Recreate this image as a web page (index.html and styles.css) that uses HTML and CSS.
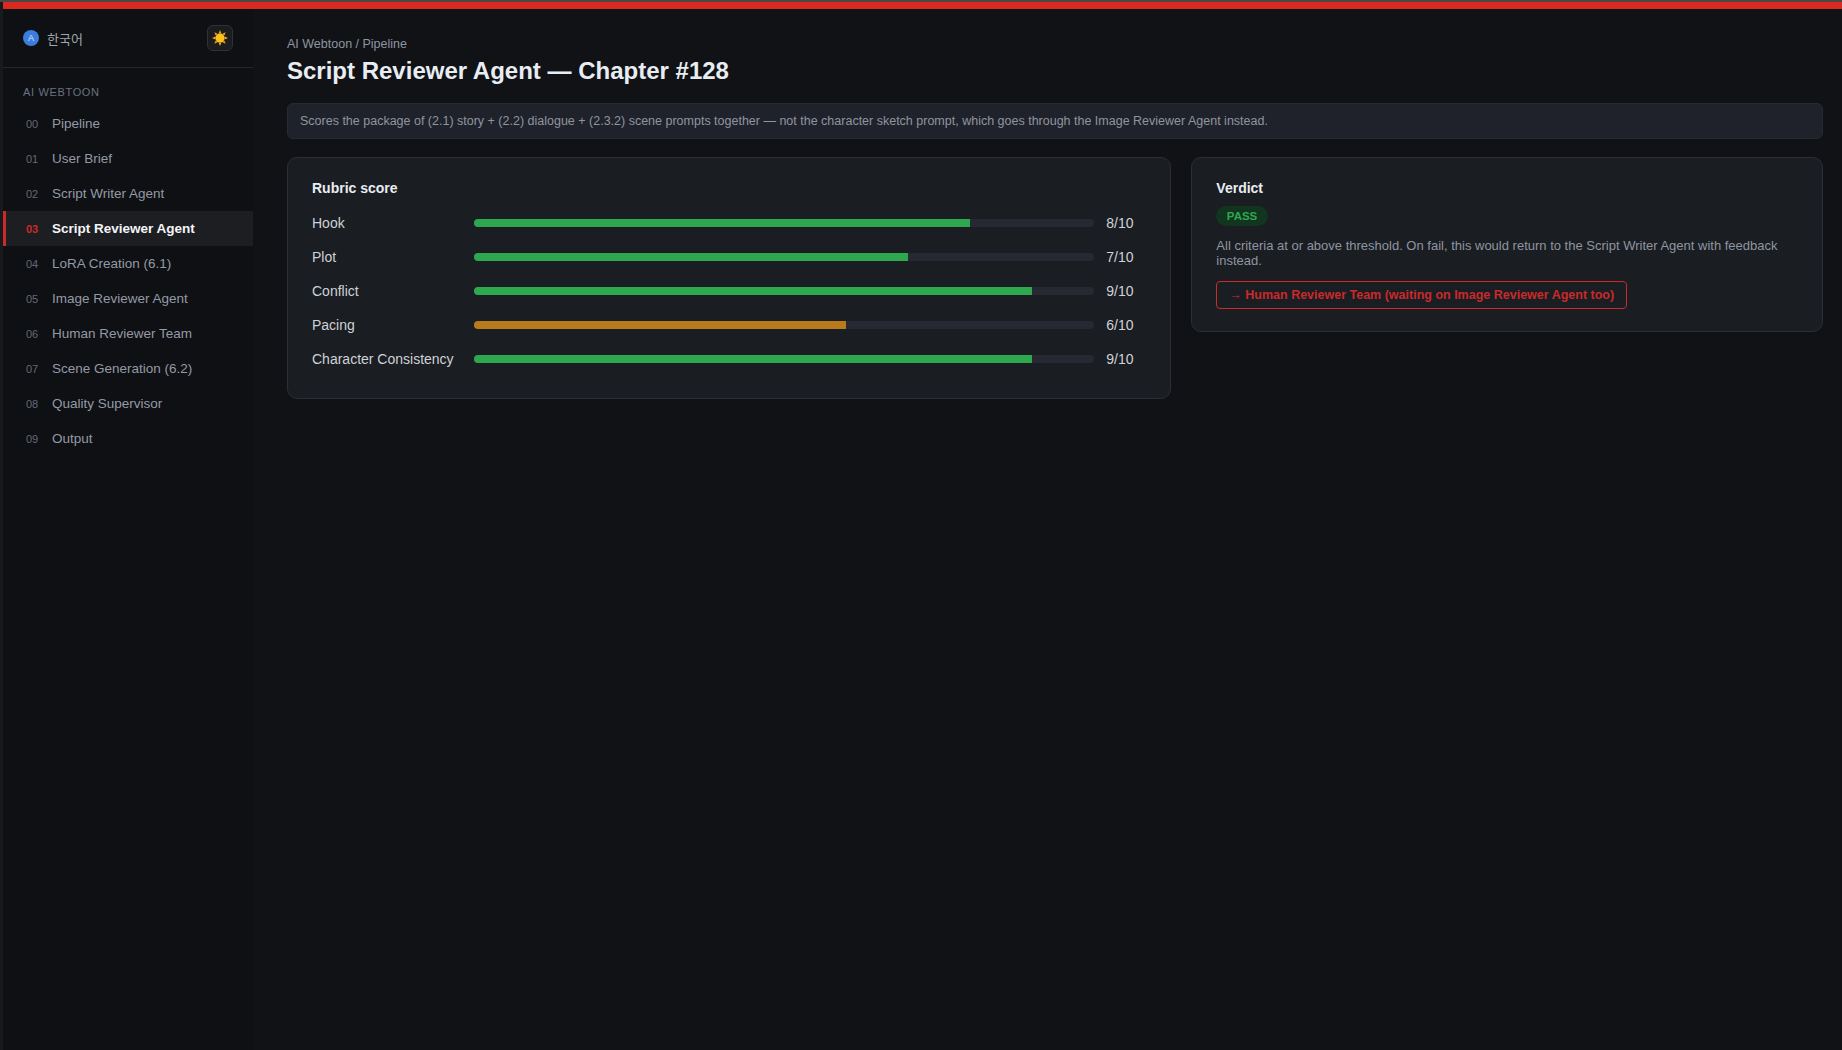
FILE: index.html
```html
<!DOCTYPE html>
<html lang="en">
<head>
	<meta charset="utf-8">
	<meta name="viewport" content="width=device-width, initial-scale=1.0">
	<link rel="stylesheet" href="styles.css">
	<title>Script Reviewer Agent</title>
</head>
<body>
	<div class="topbar"></div>
	<div class="shell">
		<aside class="sidebar">
			<div class="side-head">
				<div class="lang">
					<span class="lang-dot">A</span>
					<span class="lang-name">한국어</span>
				</div>
				<button class="theme-btn" type="button" aria-label="Theme">
					<svg class="sun" viewBox="0 0 16 16" width="16" height="16">
						<g fill="#f7a81b">
							<polygon points="8,0 9.4,3.4 6.6,3.4"/>
							<polygon points="8,16 9.4,12.6 6.6,12.6"/>
							<polygon points="0,8 3.4,6.6 3.4,9.4"/>
							<polygon points="16,8 12.6,6.6 12.6,9.4"/>
							<polygon points="2.3,2.3 5.6,3.7 3.7,5.6"/>
							<polygon points="13.7,2.3 12.3,5.6 10.4,3.7"/>
							<polygon points="2.3,13.7 3.7,10.4 5.6,12.3"/>
							<polygon points="13.7,13.7 10.4,12.3 12.3,10.4"/>
						</g>
						<circle cx="8" cy="8" r="4.6" fill="#fcc21b"/>
					</svg>
				</button>
			</div>
			<div class="side-label">AI WEBTOON</div>
			<nav class="nav">
				<a class="nav-item"><span class="nav-num">00</span>Pipeline</a>
				<a class="nav-item"><span class="nav-num">01</span>User Brief</a>
				<a class="nav-item"><span class="nav-num">02</span>Script Writer Agent</a>
				<a class="nav-item active"><span class="nav-num">03</span>Script Reviewer Agent</a>
				<a class="nav-item"><span class="nav-num">04</span>LoRA Creation (6.1)</a>
				<a class="nav-item"><span class="nav-num">05</span>Image Reviewer Agent</a>
				<a class="nav-item"><span class="nav-num">06</span>Human Reviewer Team</a>
				<a class="nav-item"><span class="nav-num">07</span>Scene Generation (6.2)</a>
				<a class="nav-item"><span class="nav-num">08</span>Quality Supervisor</a>
				<a class="nav-item"><span class="nav-num">09</span>Output</a>
			</nav>
		</aside>
		<main class="main">
			<div class="crumb">AI Webtoon / Pipeline</div>
			<h1 class="title">Script Reviewer Agent — Chapter #128</h1>
			<div class="note">Scores the package of (2.1) story + (2.2) dialogue + (2.3.2) scene prompts together — not the character sketch prompt, which goes through the Image Reviewer Agent instead.</div>
			<div class="cards">
				<section class="card">
					<h2 class="card-title rubric-title">Rubric score</h2>
					<div class="rubric">
						<div class="row">
							<span class="row-name">Hook</span>
							<div class="track"><div class="fill" style="width: 80%"></div></div>
							<span class="row-val">8/10</span>
						</div>
						<div class="row">
							<span class="row-name">Plot</span>
							<div class="track"><div class="fill" style="width: 70%"></div></div>
							<span class="row-val">7/10</span>
						</div>
						<div class="row">
							<span class="row-name">Conflict</span>
							<div class="track"><div class="fill" style="width: 90%"></div></div>
							<span class="row-val">9/10</span>
						</div>
						<div class="row">
							<span class="row-name">Pacing</span>
							<div class="track"><div class="fill warn" style="width: 60%"></div></div>
							<span class="row-val">6/10</span>
						</div>
						<div class="row">
							<span class="row-name">Character Consistency</span>
							<div class="track"><div class="fill" style="width: 90%"></div></div>
							<span class="row-val">9/10</span>
						</div>
					</div>
				</section>
				<section class="card verdict">
					<h2 class="card-title">Verdict</h2>
					<span class="badge">PASS</span>
					<p class="verdict-text">All criteria at or above threshold. On fail, this would return to the Script Writer Agent with feedback instead.</p>
					<a class="next-btn">→ Human Reviewer Team (waiting on Image Reviewer Agent too)</a>
				</section>
			</div>
		</main>
	</div>
</body>
</html>
```

FILE: styles.css
```css
* {
	box-sizing: border-box;
}
html, body {
	height: 100%;
}
body {
	margin: 0;
	padding-left: 3px;
	background-color: #17191c;
	color: #e6e8ec;
	font-family: "Liberation Sans", "Noto Sans CJK KR", sans-serif;
	font-size: 14px;
	overflow: hidden;
}
.topbar {
	height: 9px;
	margin-left: -3px;
	padding-left: 3px;
	background-color: #d92a22;
	background-clip: content-box;
	border-top: 2px solid #4a4745;
}
.shell {
	display: flex;
	height: calc(100vh - 9px);
	background-color: #101216;
}

/* sidebar */
.sidebar {
	width: 250px;
	flex-shrink: 0;
	background-color: #0e1014;
}
.side-head {
	display: flex;
	align-items: center;
	justify-content: space-between;
	height: 59px;
	padding: 0 20px;
	border-bottom: 1px solid #22252c;
}
.lang {
	display: flex;
	align-items: center;
	gap: 8px;
}
.lang-dot {
	display: flex;
	align-items: center;
	justify-content: center;
	width: 16px;
	height: 16px;
	border-radius: 50%;
	background-color: #3b7ddd;
	color: #dce9fb;
	font-size: 9px;
}
.lang-name {
	font-size: 13px;
	color: #a0a5ae;
}
.theme-btn {
	display: flex;
	align-items: center;
	justify-content: center;
	width: 26px;
	height: 26px;
	padding: 0;
	background-color: #1a1c20;
	border: 1px solid #2e3138;
	border-radius: 6px;
}
.side-label {
	margin-top: 17px;
	padding-left: 20px;
	font-size: 11px;
	line-height: 14px;
	letter-spacing: 0.66px;
	color: #6b7280;
}
.nav {
	margin-top: 7px;
}
.nav-item {
	display: flex;
	align-items: center;
	height: 35px;
	padding-left: 23px;
	font-size: 13.5px;
	color: #949aa5;
}
.nav-num {
	width: 26px;
	font-size: 11px;
	color: #636a76;
}
.nav-item.active {
	padding-left: 20px;
	background-color: #1c1e22;
	border-left: 3px solid #c92a2a;
	color: #f4f5f7;
	font-weight: 700;
}
.nav-item.active .nav-num {
	color: #c92a2a;
}

/* main */
.main {
	flex: 1;
	min-width: 0;
	padding: 28px 19px 0 34px;
}
.crumb {
	font-size: 12.5px;
	line-height: 15px;
	color: #8f95a0;
}
.title {
	margin: 3px 0 0;
	font-size: 24px;
	line-height: 32px;
	font-weight: 700;
	color: #e8edf2;
}
.note {
	margin-top: 16px;
	padding: 9px 12px;
	font-size: 12.5px;
	line-height: 16px;
	color: #8f95a0;
	background-color: #1f222a;
	border: 1px solid #262a32;
	border-radius: 6px;
}
.cards {
	display: grid;
	grid-template-columns: 1.4fr 1fr;
	gap: 20px;
	align-items: start;
	margin-top: 18px;
}
.card {
	padding: 22px 24px;
	background-color: #1a1d22;
	border: 1px solid #2a2e37;
	border-radius: 10px;
}
.card-title {
	margin: 0 0 10px;
	font-size: 14px;
	line-height: 16px;
	font-weight: 700;
	color: #e8edf2;
}
.rubric-title {
	margin-bottom: 17px;
}
.rubric {
	display: flex;
	flex-direction: column;
	gap: 14px;
	margin-bottom: 7px;
}
.row {
	display: flex;
	align-items: center;
	gap: 12px;
	font-size: 14px;
	line-height: 20px;
	color: #cfd2d8;
}
.row-name {
	width: 150px;
}
.track {
	flex: 1;
	height: 8px;
	overflow: hidden;
	background-color: #262932;
	border-radius: 4px;
}
.fill {
	height: 100%;
	background-color: #2ea84f;
}
.fill.warn {
	background-color: #b97a1c;
}
.row-val {
	width: 40px;
}
.badge {
	display: inline-block;
	padding: 0 10.5px;
	font-size: 11.5px;
	line-height: 20px;
	font-weight: 700;
	color: #2ea84f;
	background-color: #12351f;
	border-radius: 10px;
}
.verdict-text {
	margin: 12px 0 0;
	font-size: 13px;
	line-height: 15px;
	color: #8f95a0;
}
.next-btn {
	display: inline-block;
	margin-top: 13px;
	padding: 0 12px;
	font-size: 12.5px;
	line-height: 26px;
	font-weight: 700;
	color: #c92a2a;
	border: 1px solid #c92a2a;
	border-radius: 4px;
}
```
